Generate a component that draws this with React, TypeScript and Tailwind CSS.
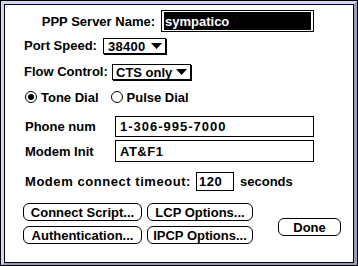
import React from "react";

function PopupArrow() {
  return (
    <svg width="11" height="6" viewBox="0 0 11 6" className="shrink-0">
      <polygon points="0,0 11,0 5.5,6" fill="#000" />
    </svg>
  );
}

function Popup({
  value,
  width,
  textPad,
}: {
  value: string;
  width: string;
  textPad: string;
}) {
  return (
    <div
      className={`flex h-[16px] items-center justify-between border border-black bg-white pr-[3px] shadow-[1px_1px_0_#000] ${width} ${textPad}`}
    >
      <span>{value}</span>
      <PopupArrow />
    </div>
  );
}

function Radio({ checked, label }: { checked?: boolean; label: string }) {
  return (
    <div className="flex items-center gap-[4px]">
      <div className="grid size-[12px] place-items-center rounded-full border-[1.5px] border-black">
        {checked ? <div className="size-[6px] rounded-full bg-black" /> : null}
      </div>
      <span>{label}</span>
    </div>
  );
}

function MacButton({
  children,
  className = "",
}: {
  children: React.ReactNode;
  className?: string;
}) {
  return (
    <button
      type="button"
      className={`flex h-[18px] items-center justify-center rounded-[6px] border border-black bg-white ${className}`}
    >
      {children}
    </button>
  );
}

export default function App() {
  return (
    <div className="h-[266px] w-[358px] bg-black p-px font-['Liberation_Sans',Arial,sans-serif] text-[13px] leading-[15px] font-bold text-black">
      <div className="h-full border-[3px] border-b-[2px] border-t-[#d4d4f4] border-r-[#9a9ac0] border-b-[#9a9ac0] border-l-[#d4d4f4]">
        <div className="flex h-full flex-col border border-black bg-white">
          {/* PPP server name */}
          <div className="mt-[5px] flex h-[22px] items-center">
            <span className="w-[150px] text-right">PPP Server Name:</span>
            <div className="ml-[6px] flex h-[22px] w-[153px] items-stretch border border-black bg-white px-[2px] py-px">
              <div className="flex flex-1 items-center bg-black pl-px text-white">sympatico</div>
            </div>
          </div>

          {/* Port speed */}
          <div className="mt-[6px] flex h-[17px] items-start pl-[19px]">
            <span className="w-[79px] leading-[16px]">Port Speed:</span>
            <Popup value="38400" width="w-[63px]" textPad="pl-[4px] tracking-[0.3px]" />
          </div>

          {/* Flow control */}
          <div className="mt-[9px] flex h-[17px] items-start pl-[19px]">
            <span className="w-[88px] leading-[16px]">Flow Control:</span>
            <Popup value="CTS only" width="w-[79px]" textPad="pl-[3px]" />
          </div>

          {/* Dial type */}
          <div className="mt-[8px] flex h-[16px] items-center gap-[12px] pl-[20px]">
            <Radio checked label="Tone Dial" />
            <Radio label="Pulse Dial" />
          </div>

          {/* Phone number */}
          <div className="mt-[11px] flex h-[21px] items-center pl-[20px]">
            <span className="w-[90px]">Phone num</span>
            <div className="flex h-[21px] w-[199px] items-center border border-black pl-[4px] tracking-[1px]">
              1-306-995-7000
            </div>
          </div>

          {/* Modem init */}
          <div className="mt-[3px] flex h-[22px] items-center pl-[20px]">
            <span className="w-[90px]">Modem Init</span>
            <div className="flex h-[22px] w-[199px] items-center border border-black pl-[4px] tracking-[0.5px]">
              AT&amp;F1
            </div>
          </div>

          {/* Timeout */}
          <div className="mt-[10px] flex h-[19px] items-center pl-[20px]">
            <span className="w-[171px] tracking-[0.55px]">Modem connect timeout:</span>
            <div className="flex h-[19px] w-[38px] items-center border border-black pl-[2px] tracking-[0.5px]">
              120
            </div>
            <span className="ml-[6px]">seconds</span>
          </div>

          {/* Buttons */}
          <div className="mt-[12px] flex pl-[18px]">
            <div className="flex flex-col gap-[5px]">
              <div className="flex gap-[5px]">
                <MacButton className="w-[119px]">Connect Script...</MacButton>
                <MacButton className="w-[106px]">LCP Options...</MacButton>
              </div>
              <div className="flex gap-[5px]">
                <MacButton className="w-[119px]">Authentication...</MacButton>
                <MacButton className="w-[106px]">IPCP Options...</MacButton>
              </div>
            </div>
            <MacButton className="mt-[15px] ml-[25px] w-[63px]">Done</MacButton>
          </div>
        </div>
      </div>
    </div>
  );
}
